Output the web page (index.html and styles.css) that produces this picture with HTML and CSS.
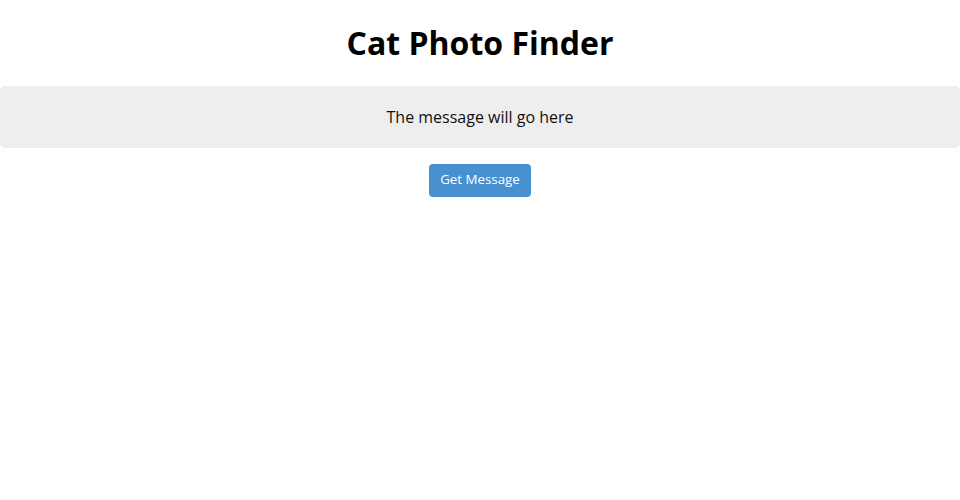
FILE: index.html
```html
<!DOCTYPE html>
<html>
<head>
<meta charset="utf-8">
<link rel="stylesheet" href="styles.css">
</head>
<body>
<h1 class="title">Cat Photo Finder</h1>
<p class="message">The message will go here</p>
<p class="actions"><button class="btn" id="getMessage">Get Message</button></p>
</body>
</html>
```
FILE: styles.css
```css
body {
  margin: 0;
  font-family: "Open Sans", sans-serif;
  text-align: center;
  color: #000;
  background: #fff;
}
.title {
  font-size: 32px;
  font-weight: 700;
  margin: 21px 0 21px;
  line-height: 44px;
}
.message {
  margin: 0;
  background: #eeeeee;
  border-radius: 5px;
  padding: 20px 0;
  font-size: 16px;
  line-height: 22px;
  color: #111;
}
.actions {
  margin: 16px 0 0;
}
.btn {
  font-family: "Open Sans", sans-serif;
  font-size: 13.333px;
  line-height: 18px;
  padding: 6px 11px 9px;
  background: #4791d0;
  color: #fff;
  border: none;
  border-radius: 4px;
}
```
